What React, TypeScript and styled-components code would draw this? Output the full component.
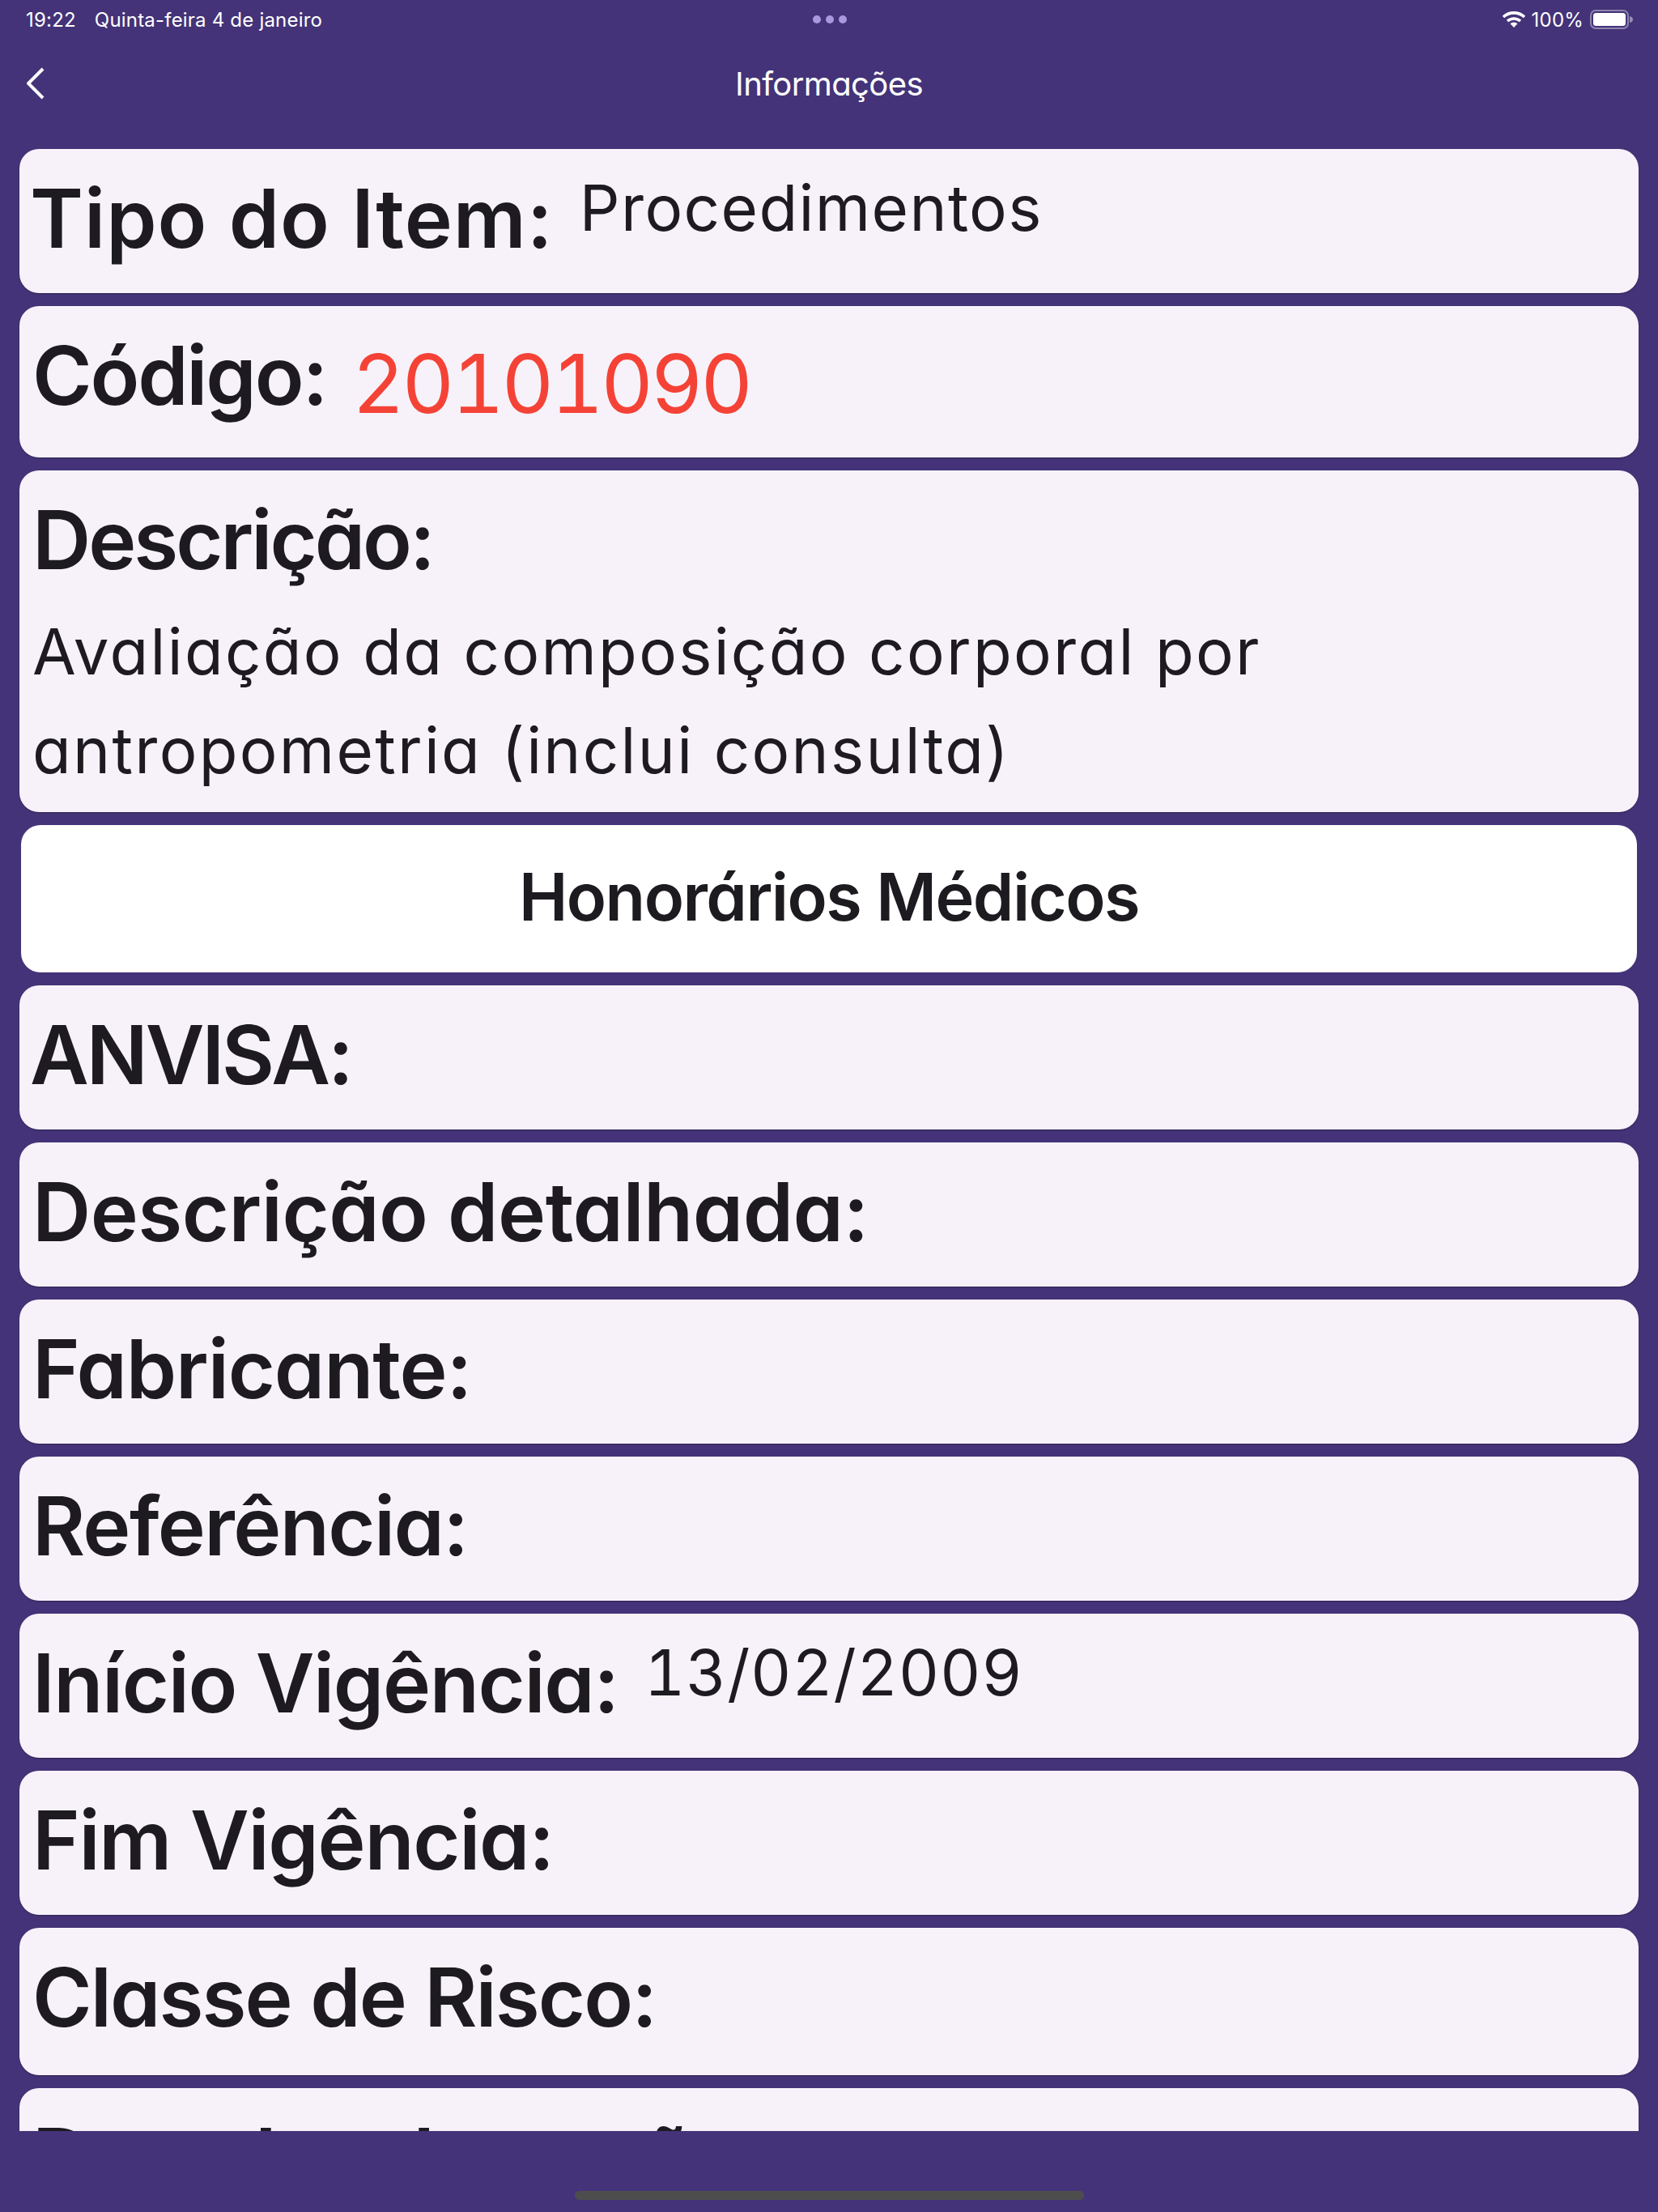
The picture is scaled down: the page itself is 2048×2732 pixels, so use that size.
import React from "react";
import styled, { createGlobalStyle } from "styled-components";

const Global = createGlobalStyle`
  html, body { margin: 0; padding: 0; background: #443378; }
`;

const Page = styled.div`
  width: 2048px;
  height: 2732px;
  display: flex;
  flex-direction: column;
  background: #443378;
  font-family: Inter, sans-serif;
  font-feature-settings: "cv11";
  color: #1d1b20;
  overflow: hidden;
`;

const StatusBar = styled.div`
  height: 48px;
  padding: 0 30px 0 32px;
  display: grid;
  grid-template-columns: 1fr auto 1fr;
  align-items: center;
  color: #fff;
  font-size: 24px;
  letter-spacing: 0.2px;
  font-feature-settings: normal;
`;
const StatusLeft = styled.div`
  display: flex;
  gap: 23px;
`;
const Dots = styled.div`
  display: flex;
  gap: 6px;
`;
const Dot = styled.span`
  width: 10px;
  height: 10px;
  border-radius: 50%;
  background: #a898e0;
`;
const StatusRight = styled.div`
  display: flex;
  justify-content: flex-end;
  align-items: center;
  gap: 8px;
`;
const NavBar = styled.div`
  height: 110px;
  padding: 0 33px 16px;
  margin-bottom: 10px;
  display: grid;
  grid-template-columns: 1fr auto 1fr;
  align-items: center;
  color: #fff;
  flex: none;
`;
const Title = styled.div`
  font-size: 40px;
  letter-spacing: -0.6px;
`;
const BackIcon = styled.svg`
  display: block;
  width: 22px;
  height: 40px;
`;
const Scroll = styled.div`
  height: 2448px;
  flex: none;
  overflow: hidden;
  padding: 0 24px;
  display: flex;
  flex-direction: column;
  gap: 16px;
`;
const Card = styled.div<{ $h?: number }>`
  flex: none;
  height: ${(p) => p.$h ?? 178}px;
  box-sizing: border-box;
  background: #f7f2fa;
  border-radius: 24px;
  padding: 0 16px;
  box-shadow: 0 1px 2px rgba(0, 0, 0, 0.3);
`;
const Row = styled(Card)`
  display: flex;
  align-items: flex-start;
  gap: 32px;
`;
const Label = styled.div<{ $spacing?: number; $shift?: number }>`
  font-size: 100px;
  font-weight: 600;
  line-height: 172px;
  letter-spacing: ${(p) => p.$spacing ?? -1.5}px;
  margin-left: ${(p) => p.$shift ?? 0}px;
  white-space: nowrap;
`;
const Value = styled.div<{ $red?: boolean; $size?: number; $top?: number; $spacing?: number }>`
  font-size: ${(p) => p.$size ?? 78}px;
  margin-top: ${(p) => p.$top ?? 25}px;
  line-height: 96px;
  letter-spacing: ${(p) => p.$spacing ?? 1.4}px;
  font-feature-settings: "cv11", "tnum";
  color: ${(p) => (p.$red ? "#f44336" : "#1d1b20")};
  white-space: nowrap;
`;
const Paragraph = styled.div`
  font-size: 78px;
  line-height: 122px;
  letter-spacing: 2.3px;
  margin-top: -9px;
`;
const Section = styled.div`
  flex: none;
  height: 182px;
  margin: 0 2px;
  background: #fff;
  border-radius: 24px;
  display: flex;
  align-items: center;
  justify-content: center;
  font-size: 81px;
  font-weight: 600;
  letter-spacing: -1.5px;
  padding-bottom: 4px;
  box-sizing: border-box;
`;
const HomeArea = styled.div`
  flex: 1;
  display: flex;
  justify-content: center;
  padding-top: 74px;
`;
const HomeBar = styled.div`
  width: 629px;
  height: 11px;
  border-radius: 5px;
  background: #4d4d4d;
`;

export default function App() {
  return (
    <Page>
      <Global />
      <StatusBar>
        <StatusLeft>
          <span>19:22</span>
          <span>Quinta-feira 4 de janeiro</span>
        </StatusLeft>
        <Dots>
          <Dot />
          <Dot />
          <Dot />
        </Dots>
        <StatusRight>
          <svg width="28" height="20" viewBox="0 0 28 20">
            <path d="M1 7 A19 19 0 0 1 27 7" fill="none" stroke="#fff" strokeWidth="3.6" />
            <path d="M6 12 A12 12 0 0 1 22 12" fill="none" stroke="#fff" strokeWidth="3.6" />
            <path d="M9.5 15.2 A6.5 6.5 0 0 1 18.5 15.2 L14 20 Z" fill="#fff" />
          </svg>
          <span>100%</span>
          <svg width="54" height="24" viewBox="0 0 54 24">
            <rect x="1" y="1" width="46" height="22" rx="6" fill="none" stroke="#fff" strokeOpacity="0.4" strokeWidth="2" />
            <rect x="4" y="4" width="40" height="16" rx="3.5" fill="#fff" />
            <path d="M49 8 Q53 9 53 12 Q53 15 49 16 Z" fill="#fff" fillOpacity="0.45" />
          </svg>
        </StatusRight>
      </StatusBar>
      <NavBar>
        <BackIcon viewBox="0 0 22 40">
          <polyline points="20,2 2,20 20,38" fill="none" stroke="#fff" strokeWidth="4" />
        </BackIcon>
        <Title>Informações</Title>
      </NavBar>
      <Scroll>
        <Row>
          <Label $spacing={1} $shift={-3}>Tipo do Item:</Label>
          <Value>Procedimentos</Value>
        </Row>
        <Row $h={187}>
          <Label $spacing={-2.2}>Código:</Label>
          <Value $red $size={100} $top={48} $spacing={-3.4}>20101090</Value>
        </Row>
        <Card $h={422}>
          <Label $spacing={-3}>Descrição:</Label>
          <Paragraph>
            Avaliação da composição corporal por
            <br />
            antropometria (inclui consulta)
          </Paragraph>
        </Card>
        <Section>Honorários Médicos</Section>
        <Row><Label $spacing={-3} $shift={-3}>ANVISA:</Label></Row>
        <Row><Label $spacing={-0.5}>Descrição detalhada:</Label></Row>
        <Row><Label $spacing={-1.1}>Fabricante:</Label></Row>
        <Row><Label $spacing={-1.6}>Referência:</Label></Row>
        <Row>
          <Label $spacing={-1.4}>Início Vigência:</Label>
          <Value $spacing={0.7}>13/02/2009</Value>
        </Row>
        <Row><Label $spacing={-1.3}>Fim Vigência:</Label></Row>
        <Row $h={182}><Label $spacing={-1.9}>Classe de Risco:</Label></Row>
        <Row><Label $spacing={-3.5}>Data de adaptação:</Label></Row>
      </Scroll>
      <HomeArea>
        <HomeBar />
      </HomeArea>
    </Page>
  );
}
